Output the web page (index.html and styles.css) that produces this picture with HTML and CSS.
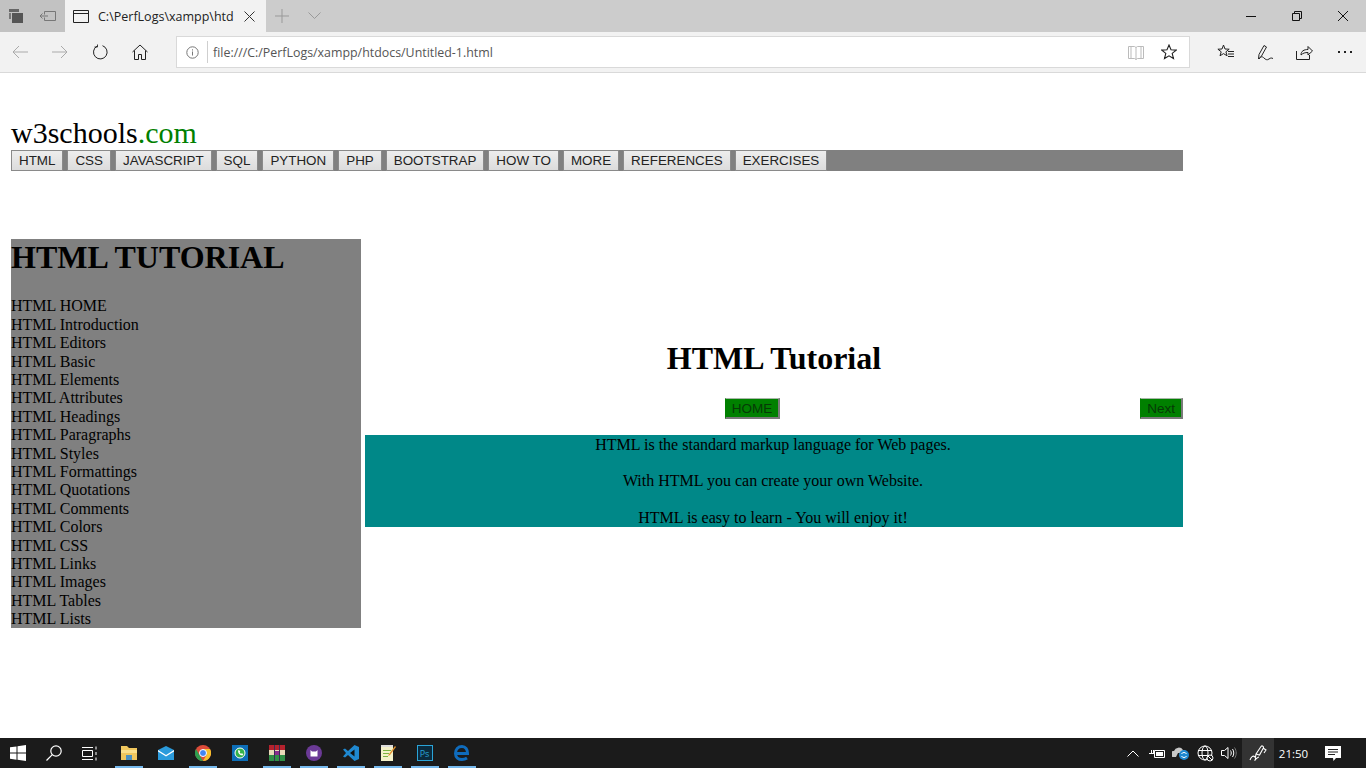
FILE: index.html
```html
<!DOCTYPE html>
<html lang="en">
<head>
    <meta charset="utf-8"/>
    <title>Untitled-1</title>
    <link rel="stylesheet" href="styles.css">
</head>
<body>
    <div class="window">
        <div class="tabstrip">
            <div class="strip-left">
                <span class="strip-icon">
                    <svg width="16" height="16" viewBox="0 0 16 16"><path d="M1 1h10v3H1z" fill="#666"/><path d="M4 5h11v10H4z" fill="#555"/><path d="M1 5h2v6H1z" fill="#777"/></svg>
                </span>
                <span class="strip-icon">
                    <svg width="18" height="16" viewBox="0 0 18 16" fill="none" stroke="#777"><path d="M5.500 3.500h11v9h-11v-3M5.500 6.500v-3M1 8h8M3.500 5.500 1 8l2.500 2.500"/></svg>
                </span>
            </div>
            <div class="tab">
                <svg width="16" height="13" viewBox="0 0 16 13" fill="none" stroke="#222"><path d="M.5.500h15v12H.5zM.5 3.500h15"/></svg>
                <span class="tab-title">C:\PerfLogs\xampp\htd</span>
                <svg class="tab-close" width="11" height="11" viewBox="0 0 11 11" stroke="#333"><path d="M.5.500l10 10M10.500.500l-10 10"/></svg>
            </div>
            <span class="strip-btn">
                <svg width="14" height="14" viewBox="0 0 14 14" stroke="#999"><path d="M7 0v14M0 7h14"/></svg>
            </span>
            <span class="strip-btn">
                <svg width="13" height="8" viewBox="0 0 13 8" fill="none" stroke="#999"><path d="M.5.500 6.500 6.500l6-6"/></svg>
            </span>
            <div class="window-btns">
                <span class="window-btn"><svg width="10" height="1" viewBox="0 0 10 1"><path d="M0 0h10v1H0z" fill="#111"/></svg></span>
                <span class="window-btn"><svg width="10" height="10" viewBox="0 0 10 10" fill="none" stroke="#111"><path d="M.5 2.500h7v7h-7zM2.500 2.500v-2h7v7h-2"/></svg></span>
                <span class="window-btn"><svg width="10" height="10" viewBox="0 0 10 10" stroke="#111"><path d="M0 0l10 10M10 0 0 10"/></svg></span>
            </div>
        </div>

        <div class="toolbar">
            <span class="tool-btn">
                <svg width="16" height="14" viewBox="0 0 16 14" fill="none" stroke="#aaa"><path d="M16 7H1M7 1 1 7l6 6"/></svg>
            </span>
            <span class="tool-btn">
                <svg width="16" height="14" viewBox="0 0 16 14" fill="none" stroke="#aaa"><path d="M0 7h15M9 1l6 6-6 6"/></svg>
            </span>
            <span class="tool-btn">
                <svg width="16" height="16" viewBox="0 0 16 16" fill="none" stroke="#222"><path d="M5 2.200A6.800 6.800 0 1 0 10.500 1.700"/><path d="M5.500 .500V3H2.500" stroke-width=".9"/></svg>
            </span>
            <span class="tool-btn">
                <svg width="16" height="16" viewBox="0 0 16 16" fill="none" stroke="#222"><path d="M.5 8 8 1l7.500 7M2.500 6.500v9h4v-5h3v5h4v-9"/></svg>
            </span>
            <div class="address">
                <span class="info-icon">
                    <svg width="13" height="13" viewBox="0 0 13 13" fill="none" stroke="#777"><circle cx="6.500" cy="6.500" r="5.700"/><path d="M6.500 5.500v4M6.500 3.300v1.200"/></svg>
                </span>
                <span class="address-text">file:///C:/PerfLogs/xampp/htdocs/Untitled-1.html</span>
                <span class="address-icon reading">
                    <svg width="16" height="15" viewBox="0 0 16 15" fill="none" stroke="#bbb"><path d="M.5 1.500h6l1.500 1 1.500-1h6v12h-6L8 14.500l-1.500-1h-6zM8 2.500v12M3 1.500v12M13 1.500v12"/></svg>
                </span>
                <span class="address-icon">
                    <svg width="16" height="16" viewBox="0 0 16 16" fill="none" stroke="#222" stroke-width="1.100"><path d="M8 1l2 4.700 5.200.4-4 3.300 1.300 5.100L8 11.800 3.500 14.500l1.300-5.100-4-3.300L6 5.700z"/></svg>
                </span>
            </div>
            <div class="tool-right">
                <span class="tool-btn small">
                    <svg width="17" height="16" viewBox="0 0 17 16" fill="none" stroke="#222"><path d="M6.500 1 8 5l4.200.2-3.300 2.600 1.200 4L6.500 9.600 3 11.800l1.200-4L.9 5.200 5 5zM11 7.500h6M11 10h6M11 12.500h6"/></svg>
                </span>
                <span class="tool-btn small">
                    <svg width="17" height="17" viewBox="0 0 17 17" fill="none" stroke="#222"><path d="M1.500 15 2 10.500 7 1.500l2.500 1.500-5 9zM2 15c2-3 3.500-2.500 5-1s3 2.500 5 1 2.500-1 4-.5"/></svg>
                </span>
                <span class="tool-btn small">
                    <svg width="17" height="15" viewBox="0 0 17 15" fill="none" stroke="#222"><path d="M.5 6v8.500h13V10M5 10c0-4 3-5.500 7-5.500V1.500L16.500 6 12 10V7.500c-3 0-5 .5-7 2.500z"/></svg>
                </span>
                <span class="tool-btn small more">
                    <svg width="14" height="2" viewBox="0 0 14 2"><path d="M0 0h2v2H0zM6 0h2v2H6zM12 0h2v2h-2z" fill="#222"/></svg>
                </span>
            </div>
        </div>

        <div class="viewport">
            <div class="logo">w3schools<span class="logo-com">.com</span></div>
            <nav class="topnav">
                <button class="nav-btn">HTML</button>
                <button class="nav-btn">CSS</button>
                <button class="nav-btn">JAVASCRIPT</button>
                <button class="nav-btn">SQL</button>
                <button class="nav-btn">PYTHON</button>
                <button class="nav-btn">PHP</button>
                <button class="nav-btn">BOOTSTRAP</button>
                <button class="nav-btn">HOW TO</button>
                <button class="nav-btn">MORE</button>
                <button class="nav-btn">REFERENCES</button>
                <button class="nav-btn">EXERCISES</button>
            </nav>
            <div class="columns">
                <aside class="sidebar">
                    <h2>HTML TUTORIAL</h2>
                    <div class="side-list">
                        <div>HTML HOME</div>
                        <div>HTML Introduction</div>
                        <div>HTML Editors</div>
                        <div>HTML Basic</div>
                        <div>HTML Elements</div>
                        <div>HTML Attributes</div>
                        <div>HTML Headings</div>
                        <div>HTML Paragraphs</div>
                        <div>HTML Styles</div>
                        <div>HTML Formattings</div>
                        <div>HTML Quotations</div>
                        <div>HTML Comments</div>
                        <div>HTML Colors</div>
                        <div>HTML CSS</div>
                        <div>HTML Links</div>
                        <div>HTML Images</div>
                        <div>HTML Tables</div>
                        <div>HTML Lists</div>
                    </div>
                </aside>
                <main class="content">
                    <h1>HTML Tutorial</h1>
                    <div class="pager">
                        <button class="green-btn">HOME</button>
                        <button class="green-btn">Next</button>
                    </div>
                    <div class="intro">
                        <p>HTML is the standard markup language for Web pages.</p>
                        <p>With HTML you can create your own Website.</p>
                        <p>HTML is easy to learn - You will enjoy it!</p>
                    </div>
                </main>
            </div>
        </div>

        <div class="taskbar">
            <span class="task-cell">
                <svg width="16" height="16" viewBox="0 0 16 16"><path d="M0 2.300 6.500 1.400v6.200H0zM7.500 1.300 16 0v7.600H7.500zM0 8.500h6.500v6.200L0 13.800zM7.500 8.500H16V16l-8.500-1.200z" fill="#fff"/></svg>
            </span>
            <span class="task-cell">
                <svg width="16" height="16" viewBox="0 0 16 16" fill="none" stroke="#fff" stroke-width="1.200"><circle cx="10" cy="6" r="5.200"/><path d="M6.300 9.700.5 15.500"/></svg>
            </span>
            <span class="task-cell">
                <svg width="16" height="15" viewBox="0 0 16 15" fill="none" stroke="#fff"><path d="M.5 4.500h10v6H.5zM0 1.500h11M0 13.500h11M14 .5v3M14 6v3M14 11.500v3" /></svg>
            </span>
            <div class="task-apps">
                <span class="task-cell running">
                    <svg width="16" height="14" viewBox="0 0 16 14"><path d="M0 0h6l2 2h8v12H0z" fill="#f0c75e"/><path d="M0 4h16v3H0z" fill="#fbe08c"/><path d="M5 9h6v5H5z" fill="#4a90c2"/></svg>
                </span>
                <span class="task-cell">
                    <svg width="16" height="14" viewBox="0 0 16 14"><path d="M0 4 8 0l8 4v10H0z" fill="#2b9bdc"/><path d="M0 4l8 5 8-5v1.500L8 10.500 0 5.500z" fill="#fff"/></svg>
                </span>
                <span class="task-cell running">
                    <svg width="16" height="16" viewBox="0 0 16 16"><circle cx="8" cy="8" r="8" fill="#dd4b39"/><path d="M8 16A8 8 0 0 1 1 4l4 7 3 5z" fill="#2e9e4f"/><path d="M8 4h7a8 8 0 0 1-7 12l3.500-6z" fill="#f6c02d"/><circle cx="8" cy="8" r="3.500" fill="#4285f4" stroke="#fff"/></svg>
                </span>
                <span class="task-cell">
                    <svg width="16" height="16" viewBox="0 0 16 16"><path d="M0 0h16v16H0z" fill="#0d6fb8"/><circle cx="8" cy="8" r="5" fill="#35b34a" stroke="#fff"/><path d="M6 5.500c0 3 1.500 4.500 4.500 5l.8-1.500-1.500-.8-.6.6c-.8-.3-1.300-.9-1.500-1.600l.6-.6L7 5z" fill="#fff"/></svg>
                </span>
                <span class="task-cell running">
                    <svg width="16" height="16" viewBox="0 0 16 16"><path d="M0 0h16v5H0z" fill="#b5222d"/><path d="M0 5h16v5H0z" fill="#e9d9b8"/><path d="M0 10h16v6H0z" fill="#2f8f46"/><path d="M5 0h1v16H5zM10 0h1v16h-1z" fill="#3b2a55"/><path d="M6 6h4v4H6z" fill="#8a2c8f"/></svg>
                </span>
                <span class="task-cell running">
                    <svg width="16" height="16" viewBox="0 0 16 16"><circle cx="8" cy="8" r="8" fill="#6b3a96"/><path d="M4.500 5 6 6.500h4L11.500 5v6.500h-7z" fill="#fff"/></svg>
                </span>
                <span class="task-cell running">
                    <svg width="16" height="16" viewBox="0 0 16 16"><path d="M11.500 0 16 2v12l-4.500 2L5 10l-3 2.500L0 11.500 3 8 0 4.500l2-1L5 6z" fill="#1f88d0"/><path d="M11.500 4.500v7L7 8z" fill="#111"/></svg>
                </span>
                <span class="task-cell running">
                    <svg width="16" height="16" viewBox="0 0 16 16"><path d="M1 1h12v15H1z" fill="#f4f1c9"/><path d="M1 0h12v2H1z" fill="#ddd"/><path d="M3 5h8v1H3zM3 8h6v1H3zM3 11h5v1H3z" fill="#7cb342"/><path d="M15 1l1 1-6 8-2 1 1-2z" fill="#e0912f"/></svg>
                </span>
                <span class="task-cell running">
                    <span class="ps-icon">Ps</span>
                </span>
                <span class="task-cell running">
                    <svg width="16" height="16" viewBox="0 0 16 16" fill="none" stroke="#0f6cbd" stroke-width="3"><path d="M3 8.500h10.500C13.500 4.500 11.500 1.500 8 1.500 4 1.500 1.500 4.500 1.500 8.500c0 4 3 6 6.500 6 2 0 3.500-.5 5-1.500"/></svg>
                </span>
            </div>
            <div class="tray">
                <span class="tray-item chevron">
                    <svg width="12" height="7" viewBox="0 0 12 7" fill="none" stroke="#fff"><path d="M.5 6.500 6 1l5.500 5.500"/></svg>
                </span>
                <span class="tray-item">
                    <svg width="16" height="11" viewBox="0 0 16 11"><path d="M5.500 2.500h10v7h-10z" fill="none" stroke="#fff"/><path d="M7 4h7v4H7zM0 5h5v1H0zM2 2h1v3H2zM4 2h1v3H4z" fill="#fff"/></svg>
                </span>
                <span class="tray-item">
                    <svg width="18" height="14" viewBox="0 0 18 14"><path d="M1 11a3 3 0 0 1 1-6 5 5 0 0 1 9-1 3 3 0 0 1 3 3H6l-2 4z" fill="#c8c8c8"/><circle cx="12" cy="9" r="5" fill="#1f88d0"/><path d="M9.500 8a2.800 2.800 0 0 1 5 0M14.500 10a2.800 2.800 0 0 1-5 0" fill="none" stroke="#fff"/></svg>
                </span>
                <span class="tray-item">
                    <svg width="17" height="17" viewBox="0 0 17 17" fill="none" stroke="#fff"><circle cx="8" cy="8" r="7"/><ellipse cx="8" cy="8" rx="3" ry="7"/><path d="M1 5.500h14M1 10.500h14"/><circle cx="13" cy="13" r="3" fill="#1b1b1b"/><path d="M11 11l4 4"/></svg>
                </span>
                <span class="tray-item">
                    <svg width="16" height="14" viewBox="0 0 16 14" fill="none" stroke="#fff"><path d="M.5 4.500h3L7 1.500v11l-3.500-3h-3zM9.500 4.500c1 1.500 1 3.500 0 5M11.500 3c1.700 2.500 1.700 5.500 0 8"/><path d="M13.500 1.500c2.300 3.500 2.300 7.500 0 11" stroke="#777"/></svg>
                </span>
                <span class="tray-item pen">
                    <svg width="18" height="18" viewBox="0 0 18 18" fill="none" stroke="#fff" stroke-width="1.100"><path d="M7 10 12 2.500c1-1.200 3-.2 2.500 1.300L10.500 11zM7 10l-.5 3M14 4l3 2-2 3M1 16c1-3 3-5 5-3s-1 4 0 3 3-3 4-3"/></svg>
                </span>
                <span class="clock">21:50</span>
                <span class="tray-item notify">
                    <svg width="16" height="15" viewBox="0 0 16 15"><path d="M0 0h16v12h-5l-2.500 3L8 12H0z" fill="#fff"/><path d="M3 3h10v1H3zM3 5.500h10v1H3zM3 8h7v1H3z" fill="#222"/></svg>
                </span>
            </div>
        </div>
    </div>
</body>
</html>
```
FILE: styles.css
```css
* {
    box-sizing: border-box;
}
body, html {
    margin: 0;
    padding: 0;
    height: 100%;
    overflow: hidden;
}
body {
    font-family: "Liberation Serif", serif;
    background-color: white;
}
.window {
    display: flex;
    flex-direction: column;
    height: 768px;
}

/* tab strip */
.tabstrip {
    display: flex;
    height: 32px;
    background-color: #cccccc;
    font-family: "Open Sans", sans-serif;
}
.strip-left {
    display: flex;
    width: 65px;
    background-color: #c2c2c2;
}
.strip-icon {
    display: flex;
    align-items: center;
    justify-content: center;
    width: 32px;
}
.tab {
    display: flex;
    align-items: center;
    width: 201px;
    padding-left: 8px;
    background-color: #f2f2f2;
    font-size: 12.500px;
    color: #222;
}
.tab-title {
    width: 136px;
    margin-left: 9px;
    white-space: nowrap;
}
.tab-close {
    margin-left: 10px;
}
.strip-btn {
    display: flex;
    align-items: center;
    justify-content: center;
    width: 32px;
}
.window-btns {
    display: flex;
    margin-left: auto;
}
.window-btn {
    display: flex;
    align-items: center;
    justify-content: center;
    width: 46px;
}

/* address row */
.toolbar {
    display: flex;
    align-items: center;
    height: 41px;
    background-color: #f2f2f2;
    border-bottom: 1px solid #d9d9d9;
}
.tool-btn {
    display: flex;
    align-items: center;
    justify-content: center;
    width: 40px;
}
.address {
    display: flex;
    align-items: center;
    width: 1014px;
    height: 32px;
    margin-left: 16px;
    background-color: white;
    border: 1px solid #d9d9d9;
}
.info-icon {
    display: flex;
    align-items: center;
    justify-content: center;
    width: 31px;
    height: 22px;
    border-right: 1px solid #cfcfcf;
}
.address-text {
    margin-left: 5px;
    font-family: "Open Sans", sans-serif;
    font-size: 12.400px;
    color: #555;
}
.address-icon {
    display: flex;
    margin-right: 12px;
}
.reading {
    margin-left: auto;
    margin-right: 17px;
}
.tool-right {
    display: flex;
    margin-left: 16px;
}
.tool-btn.small {
    width: 39.500px;
}
.tool-btn.more {
    margin-left: 1px;
}

/* page */
.viewport {
    flex: 1;
    padding: 43px 0 0 11px;
    background-color: white;
}
.logo {
    margin-bottom: 1px;
    font-size: 30px;
    line-height: 33px;
    color: black;
}
.logo-com {
    color: green;
}
.topnav {
    display: flex;
    gap: 4px;
    width: 1172px;
    height: 21px;
    background-color: gray;
}
.nav-btn {
    height: 21px;
    padding: 0 7px;
    background: linear-gradient(#ededed, #dcdcdc);
    border: 1px solid #8a8a8a;
    font-family: "Liberation Sans", sans-serif;
    font-size: 13.400px;
    color: #222;
}
.columns {
    display: flex;
    gap: 4px;
    width: 1172px;
    margin-top: 68px;
}
.sidebar {
    width: 350px;
    height: 389px;
    background-color: gray;
    font-size: 16px;
    color: black;
}
.sidebar h2 {
    margin: 0;
    font-size: 32px;
    line-height: 37px;
}
.side-list {
    margin-top: 21.400px;
    line-height: 18.400px;
}
.content {
    display: flex;
    flex-direction: column;
    flex: 1;
    padding-top: 101px;
}
.content h1 {
    margin: 0;
    font-size: 32px;
    line-height: 37px;
    text-align: center;
}
.pager {
    display: flex;
    justify-content: flex-end;
    gap: 360px;
    margin-top: 21px;
}
.green-btn {
    height: 21px;
    padding: 0 6px;
    background-color: green;
    border-style: solid;
    border-width: 1px 2px 2px 1px;
    border-color: #a8b8a8 #7a7a7a #7a7a7a green;
    font-family: "Liberation Sans", sans-serif;
    font-size: 13.500px;
    color: #063a06;
}
.intro {
    height: 92px;
    margin-top: 16px;
    padding: 1px 2px 0 0;
    background-color: #008888;
    font-size: 16px;
    line-height: 18.400px;
    text-align: center;
}
.intro p {
    margin: 0 0 18px;
}

/* taskbar */
.taskbar {
    display: flex;
    align-items: stretch;
    height: 30px;
    background-color: #1b1b1b;
}
.task-cell {
    position: relative;
    display: flex;
    align-items: center;
    justify-content: center;
    width: 36px;
}
.task-apps {
    display: flex;
    margin-left: 2px;
}
.task-apps .task-cell {
    width: 37px;
}
.running::after {
    content: "";
    position: absolute;
    left: 5px;
    right: 4px;
    bottom: 0;
    height: 2px;
    background-color: #76b9ed;
}
.ps-icon {
    display: flex;
    align-items: center;
    justify-content: center;
    width: 16px;
    height: 16px;
    background-color: #0b2a3d;
    border: 1px solid #2aa4d8;
    font-family: "Open Sans", sans-serif;
    font-size: 9px;
    color: #2aa4d8;
}
.tray {
    display: flex;
    align-items: center;
    margin-left: auto;
    margin-right: 13px;
}
.tray-item {
    display: flex;
    align-items: center;
    justify-content: center;
    width: 24px;
    height: 100%;
}
.pen {
    width: 32px;
    margin-left: 1px;
    background-color: #333333;
}
.clock {
    width: 39px;
    text-align: center;
    font-family: "Open Sans", sans-serif;
    font-size: 11.500px;
    color: white;
}
.notify {
    width: 40px;
}
```
